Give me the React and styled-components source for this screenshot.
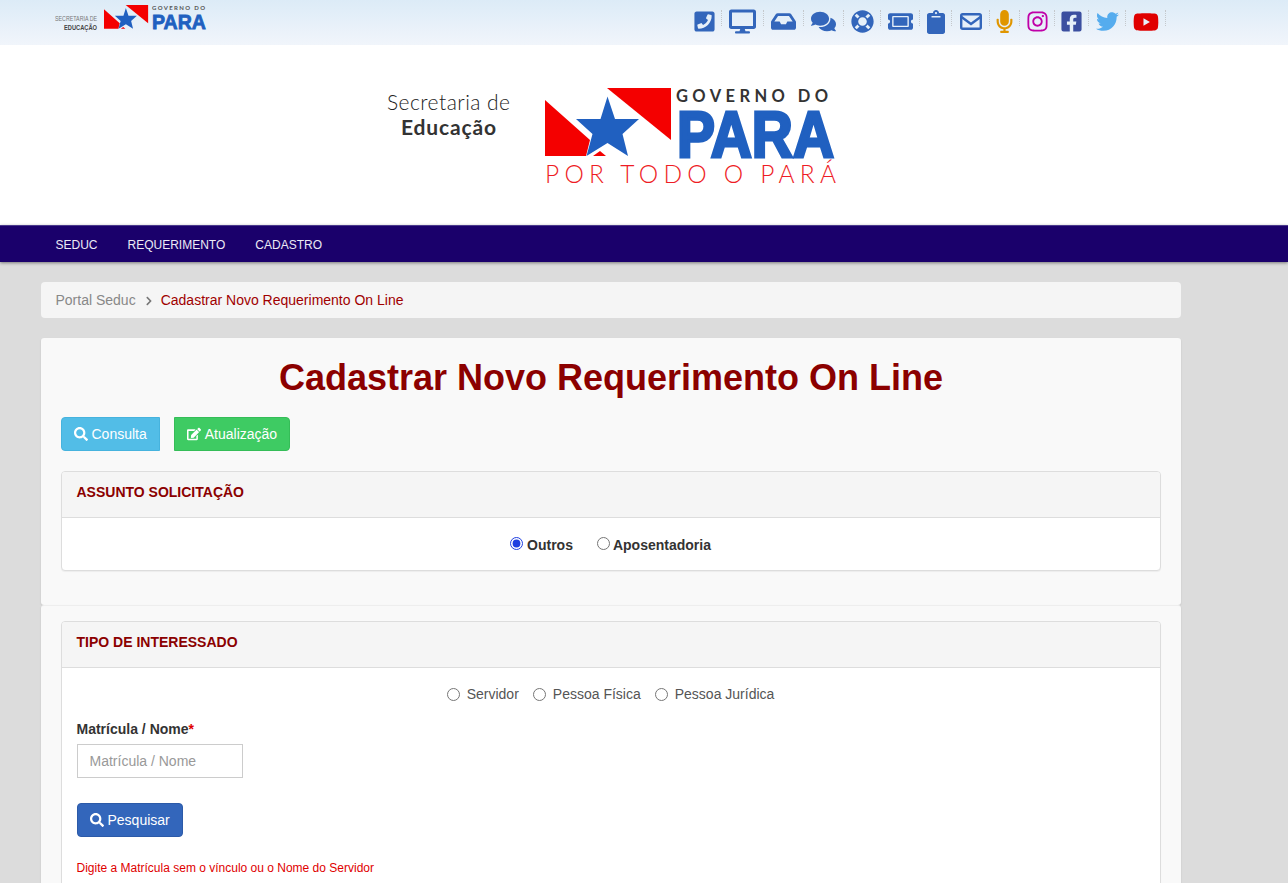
import React from 'react';
import styled, { createGlobalStyle } from 'styled-components';
import {
  FaPhoneSquare,
  FaDesktop,
  FaInbox,
  FaComments,
  FaLifeRing,
  FaTicketAlt,
  FaClipboard,
  FaMicrophone,
  FaInstagram,
  FaFacebookSquare,
  FaTwitter,
  FaYoutube,
  FaSearch,
  FaEdit,
  FaChevronRight,
} from 'react-icons/fa';

const GlobalStyle = createGlobalStyle`
  html, body {
    margin: 0;
    padding: 0;
    height: 883px;
    overflow: hidden;
    background: #dcdcdc;
    font-family: "Liberation Sans", Arial, sans-serif;
    font-size: 14px;
    color: #333;
  }
  * { box-sizing: border-box; }
`;

const Container = styled.div`
  width: 1140px;
  margin-left: 40.5px;
`;

const TopBar = styled.div`
  height: 45px;
  background: linear-gradient(to bottom, #dcebf7, #f1f5fb);
`;

const TopInner = styled(Container)`
  display: flex;
  justify-content: space-between;
  padding: 4px 14.5px 0 14.5px;
`;

const IconList = styled.div`
  display: flex;
  padding: 6px 0 0 0;
`;

const IconItem = styled.a`
  width: ${(p) => p.$w}px;
  height: 23px;
  display: flex;
  align-items: center;
  justify-content: center;
  color: ${(p) => p.$color || '#3366bb'};
  font-size: ${(p) => p.$size || 24}px;
`;

const Separator = styled.span`
  width: 1px;
  height: 16px;
  border-right: 1px dotted #c4c8cc;
`;

const Header = styled.div`
  height: 180px;
  background: #fff;
  display: flex;
  justify-content: center;
  padding: 34px 38px 0 0;
`;

const NavBar = styled.div`
  height: 37px;
  background: #1a006b;
  border-top: 1px solid #4a3a8c;
  box-shadow: 0 1px 3px rgba(0, 0, 0, 0.45);
`;

const NavInner = styled(Container)`
  display: flex;
`;

const NavLink = styled.a`
  padding: 0 15px;
  line-height: 38px;
  font-size: 12px;
  color: #eceaf5;
`;

const Breadcrumb = styled(Container)`
  margin-top: 20px;
  height: 36px;
  display: flex;
  align-items: center;
  padding: 0 15px;
  background: #f5f5f5;
  border-radius: 4px;
  color: #888;
`;

const Chevron = styled.span`
  display: flex;
  margin: 2px 7px 0 8px;
  font-size: 10px;
  color: #777;
`;

const Current = styled.span`
  color: #a00000;
`;

const Section = styled(Container)`
  background: #f9f9f9;
  padding: ${(p) => p.$padding};
  height: ${(p) => p.$height};
  margin-top: ${(p) => p.$top || 0}px;
  border-top: ${(p) => (p.$divided ? '1px solid #eeeeee' : '0')};
  border-radius: 3px;
  box-shadow: 0 1px 2px rgba(0, 0, 0, 0.12);
`;

const Title = styled.h1`
  margin: 0;
  height: 59px;
  padding-left: 1px;
  font-size: 36px;
  line-height: 40px;
  font-weight: bold;
  text-align: center;
  color: #8b0000;
`;

const ButtonRow = styled.div`
  display: flex;
  gap: 14px;
  margin-bottom: 20px;
`;

const Button = styled.button`
  height: 34px;
  display: inline-flex;
  align-items: center;
  gap: 4px;
  padding: 0 12px;
  font-family: inherit;
  font-size: 14px;
  color: #fff;
  background: ${(p) => p.$bg};
  border: 1px solid ${(p) => p.$border};
  border-radius: ${(p) => p.$radius || '4px'};
`;

const Card = styled.div`
  background: #fff;
  border: 1px solid #ddd;
  border-radius: 4px;
  box-shadow: 0 1px 1px rgba(0, 0, 0, 0.05);
`;

const CardHeading = styled.div`
  height: 46px;
  padding: 12px 15px 0;
  background: #f5f5f5;
  border-bottom: 1px solid #ddd;
  border-radius: 3px 3px 0 0;
  font-weight: bold;
  color: #8b0000;
`;

const CardBody = styled.div`
  padding: ${(p) => p.$padding || '15px'};
`;

const RadioRow = styled.div`
  display: flex;
  justify-content: center;
  align-items: center;
  gap: ${(p) => p.$gap}px;
  height: ${(p) => p.$height}px;
  padding-top: ${(p) => p.$top || 0}px;
`;

const RadioLabel = styled.label`
  display: flex;
  align-items: center;
  gap: ${(p) => p.$gap}px;
  font-weight: ${(p) => (p.$bold ? 'bold' : 'normal')};
  color: ${(p) => (p.$bold ? '#333' : '#555')};
`;

const Radio = styled.input.attrs({ type: 'radio' })`
  width: 13px;
  height: 13px;
  margin: ${(p) => (p.$lift ? '0 0 4px 0' : '0')};
  accent-color: #1f3fe0;
`;

const FieldLabel = styled.label`
  display: block;
  margin: 14px 0 5px;
  font-weight: bold;
  line-height: 20px;
`;

const Required = styled.span`
  color: #e00000;
`;

const TextInput = styled.input`
  display: block;
  width: 166px;
  height: 34px;
  padding: 6px 12px;
  font-family: inherit;
  font-size: 14px;
  color: #555;
  background: #fff;
  border: 1px solid #ccc;

  &::placeholder {
    color: #999;
  }
`;

const SearchRow = styled.div`
  margin: 25px 0 23px;
`;

const Hint = styled.p`
  margin: 0;
  font-size: 12px;
  line-height: 17px;
  color: #e00000;
`;

function EnvelopeIcon() {
  return (
    <svg width="22" height="17" viewBox="0 0 22 17" fill="none" stroke="currentColor" strokeWidth="2.4">
      <rect x="1.2" y="1.2" width="19.6" height="14.6" rx="1.5" />
      <polyline points="1.5,4 11,11 20.5,4" />
    </svg>
  );
}

function Flag() {
  return (
    <>
      <polygon points="222,1 286,1 286,53" fill="#f40000" />
      <polygon points="160,13 205,53 201,69 160,69" fill="#f40000" />
      <polygon points="208,69 221,69 215,64" fill="#f40000" />
      <polygon
        points="222.5,9.5 230,32 254,32 237.5,47 243,69 222.5,56 201.5,69 207.5,47 191,32 215.5,32"
        fill="#2060c0"
      />
    </>
  );
}

function MainLogo() {
  return (
    <svg width="480" height="113" viewBox="0 -8 480 113">
      <text x="2" y="23" fontFamily="Lato, sans-serif" fontWeight="300" fontSize="21" fill="#222" textLength="123">
        Secretaria de
      </text>
      <text x="16" y="48" fontFamily="Lato, sans-serif" fontWeight="bold" fontSize="21" fill="#333" textLength="95">
        Educação
      </text>
      <Flag />
      <text x="291" y="15" fontFamily="Lato, sans-serif" fontWeight="bold" fontSize="16.5" fill="#333" textLength="152">
        GOVERNO DO
      </text>
      <text
        x="292"
        y="70"
        fontFamily="'Liberation Sans', sans-serif"
        fontWeight="bold"
        fontSize="64"
        fill="#2060c0"
        stroke="#2060c0"
        strokeWidth="3"
        textLength="157"
        lengthAdjust="spacingAndGlyphs"
      >
        PARA
      </text>
      <text x="160" y="96" fontFamily="Lato, sans-serif" fontWeight="300" fontSize="24.5" fill="#ee1c25" textLength="291">
        POR TODO O PARÁ
      </text>
    </svg>
  );
}

function SmallLogo() {
  return (
    <svg width="160" height="34" viewBox="0 0 160 34">
      <text x="0" y="17" fontFamily="'Liberation Sans', sans-serif" fontSize="7" fill="#777" textLength="42" lengthAdjust="spacingAndGlyphs">
        SECRETARIA DE
      </text>
      <text x="9" y="26" fontFamily="'Liberation Sans', sans-serif" fontWeight="bold" fontSize="7" fill="#444" textLength="33" lengthAdjust="spacingAndGlyphs">
        EDUCAÇÃO
      </text>
      <g transform="translate(49 1) scale(0.35) translate(-160 -1)">
        <Flag />
      </g>
      <text x="97" y="6" fontFamily="Lato, sans-serif" fontWeight="bold" fontSize="6" fill="#555" textLength="53">
        GOVERNO DO
      </text>
      <text
        x="97"
        y="25"
        fontFamily="'Liberation Sans', sans-serif"
        fontWeight="bold"
        fontSize="21"
        fill="#2060c0"
        stroke="#2060c0"
        strokeWidth="0.8"
        textLength="54"
        lengthAdjust="spacingAndGlyphs"
      >
        PARA
      </text>
    </svg>
  );
}

const topIcons = [
  { Icon: FaPhoneSquare, w: 34, size: 23 },
  { Icon: FaDesktop, w: 41, size: 27 },
  { Icon: FaInbox, w: 39, size: 25 },
  { Icon: FaComments, w: 39, size: 25 },
  { Icon: FaLifeRing, w: 36, size: 23 },
  { Icon: FaTicketAlt, w: 38, size: 25 },
  { Icon: FaClipboard, w: 31, size: 24 },
  { Icon: EnvelopeIcon, w: 37 },
  { Icon: FaMicrophone, w: 29, size: 23, color: '#e09600' },
  { Icon: FaInstagram, w: 34, size: 23, color: '#c000a8' },
  { Icon: FaFacebookSquare, w: 33, size: 23, color: '#3b4fa0' },
  { Icon: FaTwitter, w: 36, size: 23, color: '#55acee' },
  { Icon: FaYoutube, w: 39, size: 26, color: '#e00000' },
];

export default function App() {
  return (
    <>
      <GlobalStyle />
      <TopBar>
        <TopInner>
          <SmallLogo />
          <IconList>
            {topIcons.map(({ Icon, w, size, color }, i) => (
              <React.Fragment key={i}>
                <IconItem $w={w} $size={size} $color={color}>
                  <Icon />
                </IconItem>
                <Separator />
              </React.Fragment>
            ))}
          </IconList>
        </TopInner>
      </TopBar>

      <Header>
        <MainLogo />
      </Header>

      <NavBar>
        <NavInner>
          <NavLink>SEDUC</NavLink>
          <NavLink>REQUERIMENTO</NavLink>
          <NavLink>CADASTRO</NavLink>
        </NavInner>
      </NavBar>

      <Breadcrumb>
        Portal Seduc
        <Chevron>
          <FaChevronRight />
        </Chevron>
        <Current>Cadastrar Novo Requerimento On Line</Current>
      </Breadcrumb>

      <Section $top={20} $padding="20px 20px 0" $height="267px">
        <Title>Cadastrar Novo Requerimento On Line</Title>
        <ButtonRow>
          <Button $bg="#52bde7" $border="#46b3de" $radius="4px 0 0 4px">
            <FaSearch /> Consulta
          </Button>
          <Button $bg="#3ecb63" $border="#35bd58" $radius="0 4px 4px 0">
            <FaEdit /> Atualização
          </Button>
        </ButtonRow>
        <Card>
          <CardHeading>ASSUNTO SOLICITAÇÃO</CardHeading>
          <CardBody $padding="0">
            <RadioRow $gap={24} $height={52} $top={2}>
              <RadioLabel $bold $gap={4}>
                <Radio name="assunto" defaultChecked $lift />
                Outros
              </RadioLabel>
              <RadioLabel $bold $gap={3}>
                <Radio name="assunto" $lift />
                Aposentadoria
              </RadioLabel>
            </RadioRow>
          </CardBody>
        </Card>
      </Section>

      <Section $divided $padding="15px 20px 0" $height="300px">
        <Card>
          <CardHeading>TIPO DE INTERESSADO</CardHeading>
          <CardBody $padding="15px">
            <RadioRow $gap={14} $height={22}>
              <RadioLabel $gap={7}>
                <Radio name="tipo" />
                Servidor
              </RadioLabel>
              <RadioLabel $gap={7}>
                <Radio name="tipo" />
                Pessoa Física
              </RadioLabel>
              <RadioLabel $gap={7}>
                <Radio name="tipo" />
                Pessoa Jurídica
              </RadioLabel>
            </RadioRow>
            <FieldLabel>
              Matrícula / Nome<Required>*</Required>
            </FieldLabel>
            <TextInput placeholder="Matrícula / Nome" />
            <SearchRow>
              <Button $bg="#3366bb" $border="#2c5aa8">
                <FaSearch /> Pesquisar
              </Button>
            </SearchRow>
            <Hint>Digite a Matrícula sem o vínculo ou o Nome do Servidor</Hint>
          </CardBody>
        </Card>
      </Section>
    </>
  );
}
